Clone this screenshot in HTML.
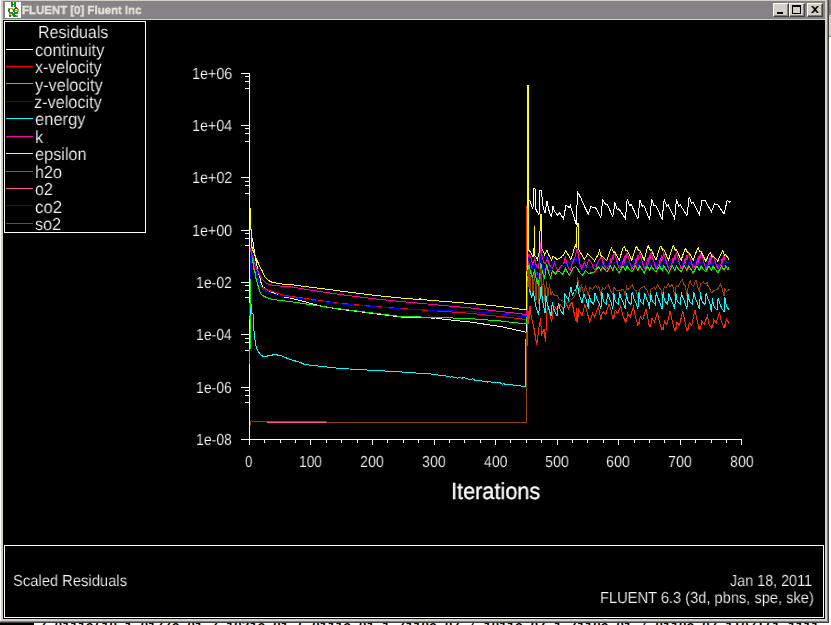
<!DOCTYPE html>
<html><head><meta charset="utf-8"><title>FLUENT [0] Fluent Inc</title>
<style>
html,body{margin:0;padding:0;}
body{width:831px;height:625px;overflow:hidden;background:#fff;position:relative;font-family:"Liberation Sans",sans-serif;color:#fff;}
div{position:absolute;white-space:nowrap;}
.t{will-change:transform;line-height:24px;text-rendering:geometricPrecision;transform-origin:0 0;}
#win{left:0;top:0;width:829px;height:623px;background:#d4d0c8;}
#title{left:3px;top:1px;width:822px;height:18px;background:#858386;}
#icon{left:2px;top:1px;width:16px;height:16px;background:#fff;}
.btn{top:2px;width:16px;height:14px;background:#d4d0c8;box-sizing:border-box;border:1px solid;border-color:#fff #404040 #404040 #fff;box-shadow:inset -1px -1px 0 #808080;}
#client{left:3px;top:20px;width:822px;height:599px;background:#000;}
#legend{left:4px;top:21px;width:140px;height:210px;border:1px solid #fff;}
.ll{left:6px;width:27px;height:1px;}
#panel{left:4px;top:545px;width:818px;height:71px;border:1px solid #fff;}
#bgtext{left:0;top:620px;color:#000;font-family:"Liberation Mono",monospace;font-weight:bold;font-size:13px;line-height:14px;}
</style></head><body>
<div style="left:829px;top:0;width:2px;height:15px;background:#858386"></div>
<div style="left:829px;top:15px;width:2px;height:21px;background:#d4d0c8"></div>
<div style="left:829px;top:36px;width:2px;height:1px;background:#808080"></div>
<div style="left:0;top:623px;width:34px;height:2px;background:#000"></div>
<div id="bgtext">    1111 7.0111e(10 1.0177e-01 7.1031e-01 (.0111e-01 1.7110e-07 /.1011e-07 1.7110e-01 /.0110e-07 1:07:(1 1111</div>
<div id="win">
 <div style="left:0;top:0;width:1px;height:623px;background:#fff"></div>
 <div style="left:827px;top:0;width:1px;height:622px;background:#808080"></div>
 <div style="left:828px;top:0;width:1px;height:623px;background:#404040"></div>
 <div style="left:0px;top:621px;width:828px;height:1px;background:#808080"></div>
 <div style="left:0;top:622px;width:829px;height:1px;background:#404040"></div>
 <div id="title">
  <div id="icon"><svg width="16" height="16" viewBox="0 0 16 16" shape-rendering="crispEdges"><rect x="6" y="0" width="2" height="5" fill="#1e8c1e"/><rect x="9" y="0" width="2" height="5" fill="#1e8c1e"/><rect x="8" y="2" width="1" height="1" fill="#1e8c1e"/><rect x="6" y="4" width="2" height="1" fill="#0a82aa"/><rect x="4" y="6" width="4" height="1" fill="#b4aa28"/><rect x="3" y="7" width="2" height="3" fill="#1e8c1e"/><rect x="4" y="10" width="4" height="1" fill="#1e8c1e"/><rect x="3" y="6" width="1" height="1" fill="#64b43c"/><rect x="7" y="7" width="1" height="1" fill="#64b43c"/><rect x="9" y="6" width="4" height="1" fill="#1e8c1e"/><rect x="10" y="5" width="2" height="2" fill="#c81e1e"/><rect x="8" y="7" width="2" height="3" fill="#1e8c1e"/><rect x="12" y="7" width="2" height="3" fill="#b4aa28"/><rect x="9" y="10" width="4" height="1" fill="#1e8c1e"/><rect x="10" y="8" width="2" height="1" fill="#64b43c"/><rect x="4" y="11" width="2" height="4" fill="#1e8c1e"/><rect x="4" y="11" width="2" height="2" fill="#c88228"/><rect x="6" y="11" width="2" height="1" fill="#1e8c1e"/><rect x="7" y="12" width="1" height="1" fill="#1e8c1e"/><rect x="6" y="13" width="2" height="1" fill="#b4aa28"/><rect x="8" y="11" width="5" height="1" fill="#1e8c1e"/><rect x="8" y="12" width="2" height="1" fill="#1e8c1e"/><rect x="8" y="13" width="5" height="1" fill="#1e8c1e"/><rect x="11" y="13" width="2" height="2" fill="#b4aa28"/><rect x="8" y="14" width="4" height="1" fill="#1e8c1e"/></svg></div>
  <div class="btn" style="left:770px"><div style="left:3px;top:8px;width:6px;height:2px;background:#000"></div></div>
  <div class="btn" style="left:786px"><div style="left:2px;top:1px;width:9px;height:9px;box-sizing:border-box;border:1px solid #000;border-top:2px solid #000"></div></div>
  <div class="btn" style="left:804px"><svg style="position:absolute;left:0;top:0" width="14" height="12" viewBox="0 0 14 12"><path d="M3 2h2l2 2 2-2h2l-3 3.5 3 3.5h-2l-2-2-2 2h-2l3-3.5z" fill="#000"/></svg></div>
 </div>
 <div id="client"></div>
</div>
<svg style="position:absolute;left:0;top:0" width="831" height="625" viewBox="0 0 831 625" shape-rendering="crispEdges" fill="none">
<rect x="249" y="73" width="1" height="372" fill="#fff"/>
<rect x="241" y="439" width="501" height="1" fill="#fff"/>
<rect x="241" y="73" width="9" height="1" fill="#fff"/>
<rect x="245" y="76" width="5" height="1" fill="#fff"/>
<rect x="245" y="81" width="5" height="1" fill="#fff"/>
<rect x="245" y="88" width="5" height="1" fill="#fff"/>
<rect x="241" y="125" width="9" height="1" fill="#fff"/>
<rect x="245" y="128" width="5" height="1" fill="#fff"/>
<rect x="245" y="133" width="5" height="1" fill="#fff"/>
<rect x="245" y="141" width="5" height="1" fill="#fff"/>
<rect x="241" y="177" width="9" height="1" fill="#fff"/>
<rect x="245" y="181" width="5" height="1" fill="#fff"/>
<rect x="245" y="185" width="5" height="1" fill="#fff"/>
<rect x="245" y="193" width="5" height="1" fill="#fff"/>
<rect x="241" y="230" width="9" height="1" fill="#fff"/>
<rect x="245" y="233" width="5" height="1" fill="#fff"/>
<rect x="245" y="238" width="5" height="1" fill="#fff"/>
<rect x="245" y="245" width="5" height="1" fill="#fff"/>
<rect x="241" y="282" width="9" height="1" fill="#fff"/>
<rect x="245" y="285" width="5" height="1" fill="#fff"/>
<rect x="245" y="290" width="5" height="1" fill="#fff"/>
<rect x="245" y="297" width="5" height="1" fill="#fff"/>
<rect x="241" y="334" width="9" height="1" fill="#fff"/>
<rect x="245" y="338" width="5" height="1" fill="#fff"/>
<rect x="245" y="342" width="5" height="1" fill="#fff"/>
<rect x="245" y="350" width="5" height="1" fill="#fff"/>
<rect x="241" y="387" width="9" height="1" fill="#fff"/>
<rect x="245" y="390" width="5" height="1" fill="#fff"/>
<rect x="245" y="395" width="5" height="1" fill="#fff"/>
<rect x="245" y="402" width="5" height="1" fill="#fff"/>
<rect x="241" y="439" width="9" height="1" fill="#fff"/>
<rect x="249" y="439" width="1" height="6" fill="#fff"/>
<rect x="264" y="439" width="1" height="4" fill="#fff"/>
<rect x="280" y="439" width="1" height="4" fill="#fff"/>
<rect x="295" y="439" width="1" height="4" fill="#fff"/>
<rect x="310" y="439" width="1" height="6" fill="#fff"/>
<rect x="326" y="439" width="1" height="4" fill="#fff"/>
<rect x="341" y="439" width="1" height="4" fill="#fff"/>
<rect x="357" y="439" width="1" height="4" fill="#fff"/>
<rect x="372" y="439" width="1" height="6" fill="#fff"/>
<rect x="387" y="439" width="1" height="4" fill="#fff"/>
<rect x="403" y="439" width="1" height="4" fill="#fff"/>
<rect x="418" y="439" width="1" height="4" fill="#fff"/>
<rect x="434" y="439" width="1" height="6" fill="#fff"/>
<rect x="449" y="439" width="1" height="4" fill="#fff"/>
<rect x="464" y="439" width="1" height="4" fill="#fff"/>
<rect x="480" y="439" width="1" height="4" fill="#fff"/>
<rect x="495" y="439" width="1" height="6" fill="#fff"/>
<rect x="510" y="439" width="1" height="4" fill="#fff"/>
<rect x="526" y="439" width="1" height="4" fill="#fff"/>
<rect x="541" y="439" width="1" height="4" fill="#fff"/>
<rect x="557" y="439" width="1" height="6" fill="#fff"/>
<rect x="572" y="439" width="1" height="4" fill="#fff"/>
<rect x="587" y="439" width="1" height="4" fill="#fff"/>
<rect x="603" y="439" width="1" height="4" fill="#fff"/>
<rect x="618" y="439" width="1" height="6" fill="#fff"/>
<rect x="634" y="439" width="1" height="4" fill="#fff"/>
<rect x="649" y="439" width="1" height="4" fill="#fff"/>
<rect x="664" y="439" width="1" height="4" fill="#fff"/>
<rect x="680" y="439" width="1" height="6" fill="#fff"/>
<rect x="695" y="439" width="1" height="4" fill="#fff"/>
<rect x="711" y="439" width="1" height="4" fill="#fff"/>
<rect x="726" y="439" width="1" height="4" fill="#fff"/>
<rect x="741" y="439" width="1" height="6" fill="#fff"/>
<g fill="none" stroke-linecap="butt" stroke-linejoin="miter">
<polyline points="249.5,424.5 250.5,424.5 250.5,421.5 251.5,420.5 252.5,421.5 326.5,421.5 326.5,422.5 526.5,422.5 526.5,206.5 527.5,206.5 527.5,345.5 527.5,300.5 528.6,324.0 530.0,306.2 531.5,318.5 533.5,325.5 536.8,345.2 538.5,330.5 540.6,318.2 541.5,335.5 544.0,328.8 545.5,342.3 547.4,302.8 549.5,312.5 551.7,322.1 553.6,305.7 557.0,309.5 559.9,304.3 563.7,309.5 564.7,300.9 568.5,308.6 571.9,301.9 574.0,312.5 576.2,322.1 576.8,308.5 577.5,322.5 578.7,309.5 582.0,316.3 584.9,304.3 587.5,313.5 589.7,322.1 592.6,313.4 594.5,316.8 598.4,306.7 599.5,312.5 600.9,319.5 601.5,315.5 603.3,311.5 605.7,314.5 608.9,304.0 610.9,309.5 612.4,317.5 612.8,319.0 613.3,315.5 613.8,318.5 615.2,310.0 616.4,312.0 617.6,313.5 620.8,306.1 622.8,315.6 625.0,321.0 625.4,322.5 625.9,319.0 626.4,322.0 627.8,313.5 629.0,315.5 630.2,317.0 633.4,307.1 635.4,316.6 637.5,323.9 637.9,325.4 638.4,321.9 638.9,324.9 640.3,316.4 641.5,318.4 642.7,319.9 645.9,309.0 647.9,318.5 649.2,325.8 649.6,327.3 650.1,323.8 650.6,326.8 652.0,318.3 653.2,320.3 654.4,321.8 657.6,312.9 659.6,322.4 661.7,328.7 662.1,330.2 662.6,326.7 663.1,329.7 664.5,321.2 665.7,323.2 666.9,324.7 670.1,310.9 672.1,320.4 674.3,329.5 674.7,331.0 675.2,327.5 675.7,330.5 677.1,322.0 678.3,324.0 679.5,325.5 682.7,310.8 684.7,320.3 686.5,329.8 686.9,331.3 687.4,327.8 687.9,330.8 689.3,322.3 690.5,324.3 691.7,325.8 694.9,309.7 696.9,319.2 699.0,328.4 699.4,329.9 699.9,326.4 700.4,329.4 701.8,320.9 703.0,322.9 704.2,324.4 707.4,315.9 709.4,325.4 711.0,327.0 711.4,328.5 711.9,325.0 712.4,328.0 713.8,319.5 715.0,321.5 716.2,323.0 719.4,312.5 721.4,322.0 723.6,326.5 724.0,328.0 724.5,324.5 725.0,327.5 726.4,319.0 727.6,321.0 728.8,322.5 729.0,323.5" stroke="#ff2a00" stroke-width="1"/>
<polyline points="252.5,421.5 267.5,421.5 267.5,422.5 526.5,422.5" stroke="#ff5a8c" stroke-width="1"/>
<polyline points="249.5,424.5 250.5,424.5 250.5,421.5 251.5,420.5 252.5,421.5 326.5,421.5 326.5,422.5 526.5,422.5 526.5,331.5 527.5,300.5 529.0,260.5 530.0,292.5 531.5,266.5 533.0,296.5 534.5,270.5 536.0,300.5 537.5,272.5 539.0,303.5 541.0,262.5 542.0,296.5 543.5,277.5 545.0,300.5 546.5,281.5 548.0,296.5 549.5,284.5 551.0,294.5 552.2,291.3 554.5,295.5 557.0,295.1 559.5,299.5 562.8,300.9 566.5,303.5 570.5,300.5 574.5,296.5 577.0,290.5 577.5,276.7 578.5,283.5 580.0,291.5 581.5,285.5 583.5,292.5 585.5,286.5 588.3,295.5 589.8,287.5 592.5,289.5 595.5,285.5 597.5,288.5 599.0,286.5 600.9,295.5 602.4,287.5 604.5,289.5 606.5,286.5 608.5,285.0 610.5,290.5 612.8,294.5 613.9,287.3 616.5,290.5 621.1,290.2 623.0,289.3 624.1,291.5 625.4,296.0 626.4,286.4 627.8,289.5 629.7,288.3 632.2,284.5 634.1,289.3 636.0,290.5 637.9,297.9 638.9,293.1 640.3,288.3 644.2,286.4 645.5,289.5 647.1,290.2 649.6,297.9 650.9,289.3 653.8,287.3 655.5,289.0 657.7,284.5 659.6,288.3 660.8,288.5 662.1,296.0 664.4,286.4 666.0,288.0 668.2,283.5 670.1,286.5 672.1,284.5 673.3,287.5 674.7,295.5 676.3,285.5 678.0,287.0 680.1,282.5 682.0,279.8 684.0,284.5 685.3,285.5 686.9,295.7 688.3,285.5 690.2,281.0 692.2,285.5 693.6,286.1 696.0,279.8 697.5,286.1 699.4,291.9 700.3,284.2 703.2,281.8 705.0,284.0 707.1,282.7 709.0,287.0 711.4,292.8 713.8,290.9 717.7,289.0 720.5,284.2 722.0,288.0 724.0,296.2 724.9,289.0 726.3,291.9 729.4,289.0" stroke="#964200" stroke-width="1"/>
<polyline points="681.5,279.5 682.5,279.5" stroke="#ff5a8c" stroke-width="1"/>
<polyline points="706.5,285.5 707.5,285.5" stroke="#ff5a8c" stroke-width="1"/>
<polyline points="252.5,238.5 253.5,245.5 254.5,252.5 255.5,258.5 256.5,263.5 257.5,268.5 258.5,273.5 260.0,277.5 261.0,282.5 262.5,286.5 264.0,287.5 268.5,290.5 276.5,294.5 284.5,297.0 292.5,298.5 320.5,306.0 336.5,308.8 400.5,317.0 433.5,318.1 434.5,318.8 435.5,317.7 437.5,318.5 470.5,322.1 500.5,326.5 524.5,331.8 525.5,332.5 526.5,331.5 526.5,286.5" stroke="#ffffff" stroke-width="1"/>
<polyline points="528.5,200.1 529.5,200.1 530.5,202.5 531.5,205.5 532.5,208.0 533.5,207.5 534.0,188.5 535.0,188.5 535.5,208.5 536.5,210.5 537.5,212.5 539.0,215.0 540.0,190.0 541.5,190.0 542.5,203.5 543.5,208.5 545.0,213.0 547.0,201.0 548.5,208.5 549.5,212.5 550.5,215.5 551.5,216.0 553.0,206.0 553.5,209.5 555.5,212.5 557.5,215.2 559.5,212.8 563.5,218.8 566.0,205.0 569.0,207.5 570.3,205.5 573.5,215.5 576.3,224.8 577.5,191.7 581.1,198.5 584.5,206.5 588.3,214.0 590.7,206.8 595.5,207.5 600.9,217.5 602.7,199.0 604.5,203.5 607.5,205.0 612.8,216.8 614.9,203.2 617.3,209.7 618.9,208.7 625.4,218.8 627.2,199.0 629.6,205.5 631.2,204.5 637.9,218.8 639.8,199.7 642.2,206.2 643.8,205.2 649.6,219.9 651.7,199.5 654.1,206.0 655.7,205.0 662.1,219.0 664.2,199.5 666.6,206.0 668.2,205.0 674.7,218.8 676.4,199.5 678.8,206.0 680.4,205.0 686.9,215.7 689.2,196.9 691.6,203.4 693.2,202.4 699.4,214.9 702.0,200.1 705.2,200.6 711.4,211.8 714.5,204.0 717.7,204.5 724.0,214.1 727.1,200.8 730.3,201.3 729.0,203.2" stroke="#ffffff" stroke-width="1"/>
<polyline points="249.5,305.5 249.5,316.5 250.5,290.5 251.5,245.5 252.5,256.5 254.5,266.5 256.5,274.5 258.5,281.5 260.5,286.0 262.5,287.5 264.5,288.5 268.5,290.5 272.5,291.5 278.5,293.5 284.5,295.5 292.5,296.5 336.5,303.0 375.5,306.5 400.5,308.5 470.5,313.3 500.5,316.5 526.5,319.5 526.5,291.5 527.5,264.5 529.3,265.7 530.8,272.7 532.8,276.7 534.8,270.7 536.8,280.7 538.8,284.7 541.3,258.7 542.8,272.7 544.8,278.7 546.8,264.7 548.8,272.7 550.8,277.7 552.8,270.7 555.8,274.7 557.8,270.7 560.8,272.7 562.8,274.7 565.8,268.7 567.8,272.7 569.8,275.7 572.8,268.7 575.8,266.7 577.8,268.7 579.8,272.7 582.8,275.7 585.8,270.7 588.8,273.7 592.8,272.7 595.2,271.7 598.7,266.7 601.2,270.7 602.9,266.7 607.1,272.2 610.6,266.1 613.1,270.5 614.8,266.2 617.1,269.7 619.5,273.0 623.2,266.1 625.7,270.5 627.4,266.2 629.7,269.7 632.1,271.9 635.7,266.1 638.2,270.5 639.9,266.2 642.2,269.7 644.6,273.0 647.4,266.1 649.9,270.5 651.6,266.2 653.9,269.7 656.3,271.9 659.9,266.1 662.4,270.5 664.1,266.2 666.4,269.7 668.8,273.0 672.5,266.1 675.0,270.5 676.7,266.2 679.0,269.7 681.4,271.9 684.7,266.1 687.2,270.5 688.9,266.2 691.2,269.7 693.6,273.0 697.2,266.1 699.7,270.5 701.4,266.2 703.7,269.7 706.1,271.9 709.2,266.1 711.7,270.5 713.4,266.2 715.7,269.7 718.1,273.0 721.8,266.1 724.3,270.5 726.0,266.2 728.3,269.7 729.3,267.7" stroke="#ff0000" stroke-width="1"/>
<polyline points="249.5,363.5 249.5,349.5 250.5,348.5 250.5,275.5 251.5,262.5 252.5,255.5 252.5,260.5 253.5,264.5 253.5,268.5 254.5,270.5 255.0,272.5 256.0,278.5 257.5,283.5 258.5,287.5 259.5,290.5 260.5,293.5 262.5,295.5 266.5,297.5 272.5,299.5 280.5,300.5 292.5,301.9 336.5,308.5 400.5,316.5 440.5,317.5 470.5,318.7 500.5,321.0 526.5,324.0 526.5,291.5 527.5,270.5 529.0,265.5 530.5,272.5 532.5,276.5 534.5,270.5 536.5,280.5 538.5,284.5 541.0,258.5 542.5,272.5 544.5,278.5 546.5,264.5 548.5,272.5 550.5,277.5 552.5,270.5 555.5,274.5 557.5,270.5 560.5,272.5 562.5,274.5 565.5,268.5 567.5,272.5 569.5,275.5 572.5,268.5 575.5,266.5 577.5,268.5 579.5,272.5 582.5,275.5 585.5,270.5 588.5,273.5 592.5,272.5 594.9,271.5 598.4,266.5 600.9,270.5 602.6,266.5 606.8,272.0 610.3,265.9 612.8,270.3 614.5,266.0 616.8,269.5 619.2,272.8 622.9,265.9 625.4,270.3 627.1,266.0 629.4,269.5 631.8,271.7 635.4,265.9 637.9,270.3 639.6,266.0 641.9,269.5 644.3,272.8 647.1,265.9 649.6,270.3 651.3,266.0 653.6,269.5 656.0,271.7 659.6,265.9 662.1,270.3 663.8,266.0 666.1,269.5 668.5,272.8 672.2,265.9 674.7,270.3 676.4,266.0 678.7,269.5 681.1,271.7 684.4,265.9 686.9,270.3 688.6,266.0 690.9,269.5 693.3,272.8 696.9,265.9 699.4,270.3 701.1,266.0 703.4,269.5 705.8,271.7 708.9,265.9 711.4,270.3 713.1,266.0 715.4,269.5 717.8,272.8 721.5,265.9 724.0,270.3 725.7,266.0 728.0,269.5 729.0,267.5" stroke="#00ff00" stroke-width="1"/>
<polyline points="250.5,255.5 250.5,278.5 251.5,262.5 252.5,251.5 253.5,256.5 254.5,262.5 255.5,268.5 256.5,272.5 257.5,276.5 258.5,280.5 259.5,284.5 260.5,287.5 262.5,289.5 266.5,291.5 272.5,293.5 278.5,295.5 284.5,296.5 292.5,297.5 336.5,303.5 400.5,309.0 440.5,310.5 470.5,311.5 500.5,314.0 526.5,317.0 526.5,291.5 527.5,262.5 529.0,256.5 530.0,262.5 531.5,270.5 533.5,262.5 536.5,274.5 538.5,278.5 541.0,253.5 542.5,268.5 544.5,272.5 546.5,256.5 548.5,264.5 550.5,270.5 552.5,262.5 555.5,266.5 558.5,263.5 560.5,265.5 563.5,266.5 566.5,264.5 568.5,266.5 570.5,262.5 573.5,258.5 575.5,262.5 577.5,256.5 579.5,266.5 582.5,270.5 585.5,264.5 588.5,266.5 591.5,267.5 594.5,264.5 598.5,262.5 600.9,267.0 603.4,261.5 607.3,267.5 609.9,259.5 612.8,267.0 615.3,261.5 619.2,267.5 621.8,259.5 625.4,267.0 627.9,261.5 631.8,267.5 634.4,259.5 637.9,267.0 640.4,261.5 644.3,267.5 646.9,259.5 649.6,267.0 652.1,261.5 656.0,267.5 658.6,259.5 662.1,267.0 664.6,261.5 668.5,267.5 671.1,259.5 674.7,267.0 677.2,261.5 681.1,267.5 683.7,259.5 686.9,267.0 689.4,261.5 693.3,267.5 695.9,259.5 699.4,267.0 701.9,261.5 705.8,267.5 708.4,259.5 711.4,267.0 713.9,261.5 717.8,267.5 720.4,259.5 724.0,267.0 726.5,261.5 729.0,263.5" stroke="#0000ff" stroke-width="1"/>
<polyline points="249.5,320.5 250.5,312.5 251.5,304.5 252.0,313.5 253.0,313.5 253.1,319.5 253.9,329.5 254.8,338.5 255.4,343.5 256.5,347.5 258.1,351.5 260.5,354.5 262.5,356.0 267.5,356.0 268.5,355.0 272.5,355.0 273.5,354.0 276.5,354.0 277.5,355.0 280.5,355.0 282.5,356.5 286.5,358.0 290.5,359.5 295.5,361.0 300.5,362.5 304.5,364.5 340.5,368.5 400.5,371.9 430.5,374.0 430.5,374.0 432.0,374.2 433.5,374.4 435.0,374.6 436.5,374.8 438.0,375.0 439.5,375.2 441.0,375.4 442.5,375.6 444.0,375.0 445.5,376.0 447.0,376.2 448.5,376.4 450.0,377.2 451.5,376.8 453.0,377.0 454.5,377.8 456.0,377.4 457.5,378.2 459.0,377.8 460.5,378.0 462.0,378.2 463.5,377.6 465.0,377.8 466.5,378.8 468.0,379.0 469.5,379.2 471.0,380.0 472.5,378.8 474.0,379.8 475.5,380.6 477.0,380.2 478.5,380.4 480.0,380.5 481.5,380.7 483.0,381.5 484.5,381.1 486.0,381.9 487.5,382.1 489.0,380.9 490.5,381.9 492.0,382.1 493.5,382.3 495.0,383.1 496.5,382.7 498.0,382.9 499.5,382.3 501.0,383.3 502.5,384.1 504.0,383.7 505.5,384.5 507.0,384.1 508.5,384.9 510.0,384.5 511.5,384.7 513.0,384.9 514.5,385.7 516.0,385.9 517.5,385.5 519.0,385.7 520.5,385.9 522.0,386.1 523.5,386.9 525.0,386.5 525.5,386.7 525.5,338.5" stroke="#00ffff" stroke-width="1"/>
<polyline points="529.0,292.5 529.5,289.3 531.5,296.5 533.5,292.5 535.5,305.5 538.7,314.4 541.1,286.5 542.5,300.5 545.0,313.4 545.9,295.1 547.5,304.5 551.2,316.3 552.2,301.9 553.5,308.5 557.0,315.8 558.4,302.8 560.5,310.5 563.7,314.4 564.7,293.2 566.5,297.5 568.5,299.9 571.0,286.9 572.4,295.1 574.5,291.5 576.2,288.4 577.5,282.5 578.5,292.5 582.0,302.8 583.9,294.2 586.5,300.5 588.3,308.6 589.3,295.1 591.0,301.5 593.8,304.5 595.0,293.0 596.8,298.5 598.8,302.5 600.9,308.5 600.9,309.0 601.9,292.0 603.1,300.0 604.2,302.0 606.5,304.5 607.6,293.2 609.4,298.5 611.4,303.0 612.8,309.0 613.8,292.6 615.0,300.0 616.1,302.0 618.4,304.5 619.5,292.6 621.3,298.5 623.3,303.0 625.4,309.0 626.4,293.2 627.6,300.0 628.7,302.0 631.0,304.5 632.1,292.0 633.9,298.5 635.9,303.0 637.9,309.0 638.9,292.3 640.1,300.0 641.2,302.0 643.5,304.5 644.6,292.9 646.4,298.5 648.4,303.0 649.6,309.0 650.6,292.9 651.8,300.0 652.9,302.0 655.2,304.5 656.3,292.3 658.1,298.5 660.1,303.0 662.1,309.0 663.1,292.0 664.3,300.0 665.4,302.0 667.7,304.5 668.8,293.2 670.6,298.5 672.6,303.0 674.7,309.0 675.7,292.6 676.9,300.0 678.0,302.0 680.3,304.5 681.4,292.6 683.2,298.5 685.2,303.0 686.9,309.0 687.9,293.2 689.1,300.0 690.2,302.0 692.5,304.5 693.6,292.0 695.4,298.5 697.4,303.0 699.4,309.0 700.4,292.3 701.6,300.0 702.7,302.0 705.0,304.5 706.1,292.9 707.9,298.5 709.9,303.0 711.4,312.0 712.4,298.4 713.6,305.5 714.7,307.5 717.0,310.0 718.1,297.8 719.9,304.0 721.9,308.5 724.0,312.0 725.0,297.5 726.2,305.5 727.3,307.5 729.0,310.1" stroke="#00ffff" stroke-width="1"/>
<polyline points="250.5,248.5 251.5,254.5 252.5,255.5 253.5,259.5 254.5,262.5 255.5,265.5 256.5,268.5 257.5,270.5 258.5,272.5 260.5,276.5 262.5,279.5 265.5,282.5 268.5,284.5 274.5,285.5 284.5,286.5 292.5,287.0 300.5,288.5 336.5,294.0 375.5,299.0 400.5,301.5 470.5,308.0 500.5,311.5 526.5,314.5 526.5,291.5 527.5,258.5 529.0,254.5 531.5,258.5 532.5,264.5 534.5,258.5 536.5,266.5 538.5,268.5 541.1,241.1 542.0,255.5 543.5,262.5 545.5,263.5 547.5,258.5 548.5,262.5 550.5,266.5 552.5,268.5 554.5,262.5 556.5,268.5 558.5,270.5 560.5,266.5 563.5,264.5 565.5,256.5 566.5,262.5 568.5,268.5 570.5,270.5 572.5,262.5 574.5,258.5 577.0,249.5 578.0,252.5 579.5,262.5 581.5,268.5 584.5,262.5 586.5,266.5 589.0,259.5 591.5,262.5 593.5,268.5 595.5,270.5 597.5,262.5 599.5,259.5 601.5,256.5 603.5,264.5 606.8,269.0 609.6,265.0 611.0,258.5 611.5,262.5 612.5,255.5 613.1,260.0 614.0,254.0 614.5,253.0 619.2,268.8 622.2,265.0 623.6,258.5 624.1,262.5 625.1,255.5 625.7,260.0 626.6,254.0 627.1,253.0 631.8,268.8 634.7,265.0 636.1,258.5 636.6,262.5 637.6,255.5 638.2,260.0 639.1,254.0 639.6,253.0 644.3,268.8 646.4,265.0 647.8,258.5 648.3,262.5 649.3,255.5 649.9,260.0 650.8,254.0 651.3,253.0 656.0,268.8 658.9,265.0 660.3,258.5 660.8,262.5 661.8,255.5 662.4,260.0 663.3,254.0 663.8,253.0 668.5,268.8 671.5,265.0 672.9,258.5 673.4,262.5 674.4,255.5 675.0,260.0 675.9,254.0 676.4,253.0 681.1,268.8 683.7,265.0 685.1,258.5 685.6,262.5 686.6,255.5 687.2,260.0 688.1,254.0 688.6,253.0 693.3,268.8 696.2,265.0 697.6,258.5 698.1,262.5 699.1,255.5 699.7,260.0 700.6,254.0 701.1,253.0 705.8,268.8 708.2,265.0 709.6,258.5 710.1,262.5 711.1,255.5 711.7,260.0 712.6,254.0 713.1,255.5 717.8,268.8 720.8,265.0 722.2,258.5 722.7,262.5 723.7,255.5 724.3,260.0 725.2,254.0 725.7,255.5 729.0,258.5" stroke="#ff00aa" stroke-width="1"/>
<polyline points="250.5,207.5 250.5,229.5 251.5,229.5 251.5,245.5 252.5,249.5 253.5,251.5 254.5,253.5 255.5,256.5 256.5,259.5 257.5,261.5 258.5,263.5 259.5,266.0 260.5,268.0 262.0,270.5 263.5,274.5 265.5,277.5 268.5,280.5 272.5,282.5 278.5,283.5 284.5,284.5 292.5,284.8 300.5,286.0 336.5,290.5 375.5,295.5 400.5,298.0 419.5,299.5 420.0,298.5 420.5,299.5 470.5,303.5 500.5,306.5 526.5,310.0 526.5,291.5 527.5,250.5 527.5,85.5 528.5,85.5 528.5,250.5 530.0,251.2 532.9,256.5 533.9,255.5 534.4,226.5 534.9,255.5 535.5,256.5 537.3,259.4 539.7,250.5 540.3,214.5 541.3,214.5 541.9,248.5 544.5,254.5 546.9,250.2 548.5,254.5 551.7,260.3 553.1,256.0 557.0,259.4 559.9,257.9 562.5,256.5 565.7,250.7 571.0,259.4 575.3,244.9 576.5,247.5 577.1,223.5 578.1,223.5 578.7,249.5 584.4,259.4 587.8,253.6 594.5,260.8 598.4,254.1 599.5,250.5 601.0,255.5 606.8,260.5 610.5,249.4 611.6,248.0 613.4,252.2 614.5,251.6 619.2,260.2 623.1,247.9 624.2,246.5 626.0,250.7 627.1,250.1 631.8,260.2 635.6,247.9 636.7,246.5 638.5,250.7 639.6,250.1 644.3,260.2 647.3,247.4 648.4,246.0 650.2,250.2 651.3,249.6 656.0,260.2 659.8,247.4 660.9,246.0 662.7,250.2 663.8,249.6 668.5,260.2 672.4,247.4 673.5,246.0 675.3,250.2 676.4,249.6 681.1,260.2 684.6,249.9 685.7,248.5 687.5,252.7 688.6,252.1 693.3,260.2 697.1,249.4 698.2,248.0 700.0,252.2 701.1,251.6 705.8,261.1 709.1,253.9 710.2,252.5 712.0,256.7 713.1,256.1 717.8,261.1 721.7,252.2 722.8,250.8 724.6,255.0 725.7,254.4 729.0,259.8" stroke="#ffff00" stroke-width="1"/>
</g>
</svg>
<div id="legend"></div>
<div class="ll" style="top:49px;background:#ffffff"></div>
<div class="ll" style="top:66px;background:#ff0000"></div>
<div class="ll" style="top:83px;background:#00ff00"></div>
<div class="ll" style="top:101px;background:#0000ff"></div>
<div class="ll" style="top:118px;background:#00ffff"></div>
<div class="ll" style="top:136px;background:#ff00aa"></div>
<div class="ll" style="top:153px;background:#ffff00"></div>
<div class="ll" style="top:171px;background:#ff2a00"></div>
<div class="ll" style="top:188px;background:#ff5a8c"></div>
<div class="ll" style="top:205px;background:#3c1400"></div>
<div class="ll" style="top:223px;background:#964200"></div>
<div id="panel"></div>
<div class="t" style="left:22.44px;top:-1px;font-size:11.6px;transform:scaleX(0.9862);-webkit-text-stroke:0.35px #e8e4dc;font-weight:bold;color:#e8e4dc;">FLUENT [0] Fluent Inc</div>
<div class="t" style="left:38.33px;top:20px;font-size:17.44px;transform:scaleX(0.9196);-webkit-text-stroke:0.2px #000;">Residuals</div>
<div class="t" style="left:34.98px;top:38px;font-size:17.44px;transform:scaleX(0.9411);-webkit-text-stroke:0.2px #000;">continuity</div>
<div class="t" style="left:34.54px;top:55px;font-size:17.44px;transform:scaleX(0.9148);-webkit-text-stroke:0.2px #000;">x-velocity</div>
<div class="t" style="left:35.24px;top:73px;font-size:17.44px;transform:scaleX(0.9313);-webkit-text-stroke:0.2px #000;">y-velocity</div>
<div class="t" style="left:34.36px;top:90px;font-size:17.44px;transform:scaleX(0.9323);-webkit-text-stroke:0.2px #000;">z-velocity</div>
<div class="t" style="left:34.95px;top:107px;font-size:17.44px;transform:scaleX(0.9469);-webkit-text-stroke:0.2px #000;">energy</div>
<div class="t" style="left:35.06px;top:125px;font-size:17.44px;transform:scaleX(0.9370);-webkit-text-stroke:0.2px #000;">k</div>
<div class="t" style="left:34.96px;top:142px;font-size:17.44px;transform:scaleX(0.9339);-webkit-text-stroke:0.2px #000;">epsilon</div>
<div class="t" style="left:35.05px;top:160px;font-size:17.44px;transform:scaleX(0.9216);-webkit-text-stroke:0.2px #000;">h2o</div>
<div class="t" style="left:35.00px;top:177px;font-size:17.44px;transform:scaleX(0.9177);-webkit-text-stroke:0.2px #000;">o2</div>
<div class="t" style="left:34.97px;top:195px;font-size:17.44px;transform:scaleX(0.9624);-webkit-text-stroke:0.2px #000;">co2</div>
<div class="t" style="left:34.93px;top:212px;font-size:17.44px;transform:scaleX(0.9238);-webkit-text-stroke:0.2px #000;">so2</div>
<div class="t" style="left:191.67px;top:63px;font-size:16px;transform:scaleX(0.8957);-webkit-text-stroke:0.2px #000;">1e+06</div>
<div class="t" style="left:191.67px;top:115px;font-size:16px;transform:scaleX(0.8940);-webkit-text-stroke:0.2px #000;">1e+04</div>
<div class="t" style="left:191.67px;top:167px;font-size:16px;transform:scaleX(0.8975);-webkit-text-stroke:0.2px #000;">1e+02</div>
<div class="t" style="left:191.67px;top:220px;font-size:16px;transform:scaleX(0.8932);-webkit-text-stroke:0.2px #000;">1e+00</div>
<div class="t" style="left:196.09px;top:272px;font-size:16px;transform:scaleX(0.8768);-webkit-text-stroke:0.2px #000;">1e-02</div>
<div class="t" style="left:196.09px;top:324px;font-size:16px;transform:scaleX(0.8731);-webkit-text-stroke:0.2px #000;">1e-04</div>
<div class="t" style="left:196.09px;top:377px;font-size:16px;transform:scaleX(0.8748);-webkit-text-stroke:0.2px #000;">1e-06</div>
<div class="t" style="left:196.09px;top:429px;font-size:16px;transform:scaleX(0.8760);-webkit-text-stroke:0.2px #000;">1e-08</div>
<div class="t" style="left:245.18px;top:451px;font-size:16px;transform:scaleX(0.8149);-webkit-text-stroke:0.2px #000;">0</div>
<div class="t" style="left:298.91px;top:451px;font-size:16px;transform:scaleX(0.8574);-webkit-text-stroke:0.2px #000;">100</div>
<div class="t" style="left:360.46px;top:451px;font-size:16px;transform:scaleX(0.8938);-webkit-text-stroke:0.2px #000;">200</div>
<div class="t" style="left:421.99px;top:451px;font-size:16px;transform:scaleX(0.8926);-webkit-text-stroke:0.2px #000;">300</div>
<div class="t" style="left:483.83px;top:451px;font-size:16px;transform:scaleX(0.8795);-webkit-text-stroke:0.2px #000;">400</div>
<div class="t" style="left:544.90px;top:451px;font-size:16px;transform:scaleX(0.8961);-webkit-text-stroke:0.2px #000;">500</div>
<div class="t" style="left:606.42px;top:451px;font-size:16px;transform:scaleX(0.8954);-webkit-text-stroke:0.2px #000;">600</div>
<div class="t" style="left:667.94px;top:451px;font-size:16px;transform:scaleX(0.8944);-webkit-text-stroke:0.2px #000;">700</div>
<div class="t" style="left:729.50px;top:451px;font-size:16px;transform:scaleX(0.8921);-webkit-text-stroke:0.2px #000;">800</div>
<div class="t" style="left:450.73px;top:479px;font-size:23.26px;transform:scaleX(0.9331);-webkit-text-stroke:0.3px #fff;">Iterations</div>
<div class="t" style="left:12.71px;top:570px;font-size:16px;transform:scaleX(0.9219);-webkit-text-stroke:0.2px #000;">Scaled Residuals</div>
<div class="t" style="left:729.61px;top:570px;font-size:16px;transform:scaleX(0.8976);-webkit-text-stroke:0.2px #000;">Jan 18, 2011</div>
<div class="t" style="left:599.56px;top:587px;font-size:16px;transform:scaleX(0.9154);-webkit-text-stroke:0.2px #000;">FLUENT 6.3 (3d, pbns, spe, ske)</div>
</body></html>
